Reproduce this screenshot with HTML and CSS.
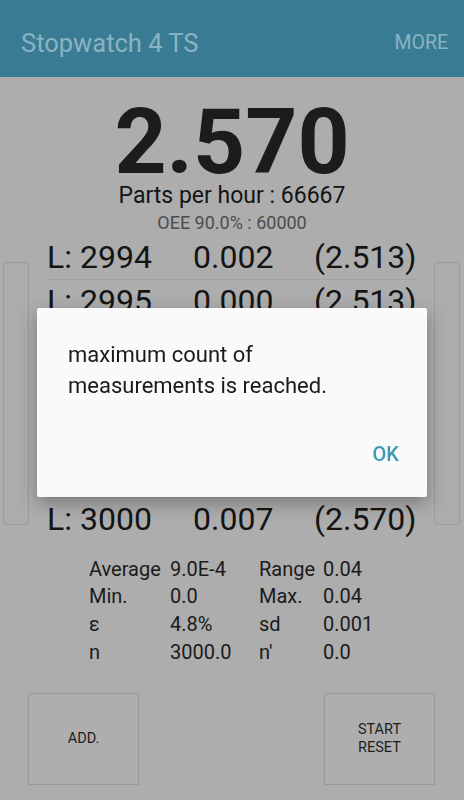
FILE: index.html
```html
<!DOCTYPE html>
<html lang="en">
<head>
    <meta charset="UTF-8">
    <meta name="viewport" content="width=device-width, initial-scale=1.0">
    <title>Stopwatch 4 TS</title>
    <link rel="stylesheet" href="styles.css">
</head>
<body>

    <!-- Action bar -->
    <div class="app-bar">
        <span class="app-title">Stopwatch 4 TS</span>
        <span class="app-menu">MORE</span>
    </div>

    <!-- Current lap -->
    <div class="current">
        <div class="big-time">2.570</div>
        <div class="parts">Parts per hour : 66667</div>
        <div class="oee">OEE 90.0% : 60000</div>
    </div>

    <!-- Lap list with scroll bars -->
    <div class="laps-area">
        <div class="side-bar"></div>
        <div class="laps">
            <div class="lap"><span>L: 2994</span><span>0.002</span><span>(2.513)</span></div>
            <div class="lap"><span>L: 2995</span><span>0.000</span><span>(2.513)</span></div>
            <div class="lap"><span>L: 2996</span><span>0.041</span><span>(2.554)</span></div>
            <div class="lap"><span>L: 2997</span><span>0.004</span><span>(2.558)</span></div>
            <div class="lap"><span>L: 2998</span><span>0.002</span><span>(2.560)</span></div>
            <div class="lap"><span>L: 2999</span><span>0.003</span><span>(2.563)</span></div>
            <div class="lap"><span>L: 3000</span><span>0.007</span><span>(2.570)</span></div>
        </div>
        <div class="side-bar"></div>
    </div>

    <!-- Statistics -->
    <div class="stats">
        <span>Average</span><span>9.0E-4</span><span>Range</span><span>0.04</span>
        <span>Min.</span><span>0.0</span><span>Max.</span><span>0.04</span>
        <span>&epsilon;</span><span>4.8%</span><span>sd</span><span>0.001</span>
        <span>n</span><span>3000.0</span><span>n'</span><span>0.0</span>
    </div>

    <!-- Buttons -->
    <div class="actions">
        <button class="action-btn">ADD.</button>
        <button class="action-btn">START<br>RESET</button>
    </div>

    <!-- Alert dialog -->
    <div class="scrim">
        <div class="dialog">
            <p class="dialog-text">maximum count of<br>measurements is reached.</p>
            <div class="dialog-buttons">
                <button class="dialog-ok">OK</button>
            </div>
        </div>
    </div>

</body>
</html>
```

FILE: styles.css
```css
body {
    margin: 0;
    font-family: Roboto, "Liberation Sans", sans-serif;
    background-color: #adadad;
    color: #161616;
}

.app-bar {
    height: 77px;
    box-sizing: border-box;
    padding: 28px 16px 0 21px;
    background-color: #3a7b94;
    color: #8ab3c2;
    display: flex;
    justify-content: space-between;
    align-items: flex-start;
}

.app-title {
    font-size: 25.5px;
    line-height: 30px;
}

.app-menu {
    font-size: 19.5px;
    line-height: 30px;
}

.current {
    text-align: center;
    padding-top: 25px;
}

.big-time {
    font-size: 91px;
    font-weight: bold;
    line-height: 80px;
    color: #1c1c1c;
}

.parts {
    font-size: 23px;
    line-height: 24px;
    margin-top: 2px;
    color: #141414;
}

.oee {
    font-size: 18px;
    line-height: 20px;
    margin-top: 5px;
    color: #4c4c4c;
}

.laps-area {
    display: flex;
    align-items: flex-start;
    padding: 0 3px;
    margin-top: 3px;
}

.side-bar {
    width: 26px;
    height: 263px;
    margin-top: 26px;
    box-sizing: border-box;
    border: 1px solid #9c9c9c;
    border-radius: 3px;
    background-color: #acacac;
}

.laps {
    width: 373px;
    margin: 0 16px;
}

.lap {
    display: grid;
    grid-template-columns: 146px 121px auto;
    padding-left: 2px;
    font-size: 32px;
    line-height: 42.67px;
    border-bottom: 1px solid #a2a2a2;
    color: #141414;
}

.lap:last-child {
    border-bottom: none;
}

.stats {
    display: grid;
    grid-template-columns: 81px 89px 64px auto;
    padding-left: 89px;
    margin-top: 15px;
    font-size: 20px;
    line-height: 27.67px;
    color: #1a1a1a;
}

.actions {
    display: flex;
    justify-content: space-between;
    padding: 0 29px 0 28px;
    margin-top: 27px;
}

.action-btn {
    width: 111px;
    height: 92px;
    font-family: Roboto, "Liberation Sans", sans-serif;
    font-size: 14.5px;
    line-height: 18px;
    color: #1e1e1e;
    background-color: #aeaeae;
    border: 1px solid #9a9a9a;
    border-radius: 3px;
    box-shadow: 0 1px 1px rgba(0, 0, 0, 0.15);
}

.scrim {
    position: fixed;
    top: 0;
    left: 0;
    right: 0;
    bottom: 0;
    display: flex;
    justify-content: center;
    align-items: flex-start;
    padding-top: 308px;
}

.dialog {
    width: 390px;
    box-sizing: border-box;
    padding: 31px 28px 31px 31px;
    background-color: #fafafa;
    border-radius: 2px;
    box-shadow: 0 6px 18px rgba(0, 0, 0, 0.3);
}

.dialog-text {
    margin: 0;
    font-size: 22px;
    line-height: 31px;
    color: #1a1a1a;
}

.dialog-buttons {
    display: flex;
    justify-content: flex-end;
    margin-top: 41px;
}

.dialog-ok {
    padding: 0;
    border: none;
    background: none;
    font-family: Roboto, "Liberation Sans", sans-serif;
    font-size: 20px;
    font-weight: 500;
    line-height: 24px;
    color: #3b9bb4;
}
```
